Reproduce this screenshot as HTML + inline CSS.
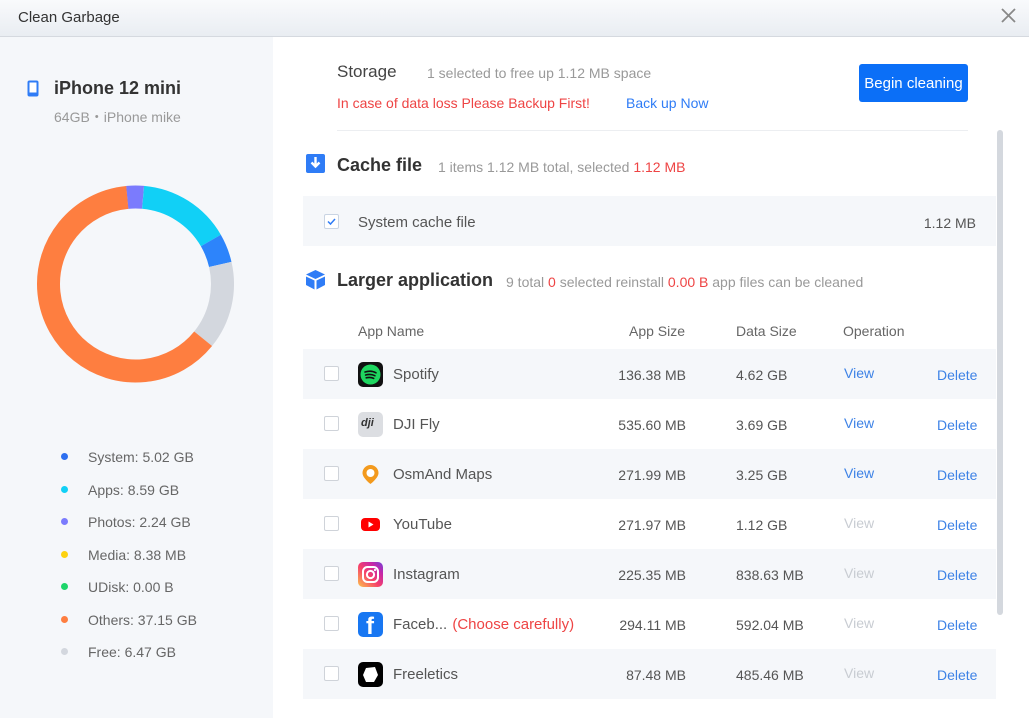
<!DOCTYPE html>
<html><head><meta charset="utf-8"><style>
*{margin:0;padding:0;box-sizing:border-box}
body{width:1029px;height:718px;overflow:hidden;font-family:"Liberation Sans",sans-serif;background:#fff;position:relative;color:#333}
.abs{position:absolute;white-space:nowrap}
.title{left:0;top:0;width:1029px;height:37px;background:linear-gradient(#f9fafc,#e9edf2);border-bottom:1px solid #d5d9df}
.left{left:0;top:37px;width:273px;height:681px;background:#f5f7fa}
.lg{font-size:14px;color:#666}
.dot{width:7px;height:7px;border-radius:50%;position:absolute}
.row{position:absolute;left:303px;width:693px;height:50px}
.sh{background:#f5f7fa}
.cb{position:absolute;left:21px;top:17px;width:15px;height:15px;border:1px solid #cfd3d9;background:#fff;border-radius:2px}
.ic{position:absolute;left:55px;top:13px;width:25px;height:25px;border-radius:5px;overflow:hidden}
.nm{position:absolute;left:90px;top:17px;font-size:15px;color:#555}
.as{position:absolute;right:310px;top:18px;font-size:14px;color:#555}
.ds{position:absolute;left:433px;top:18px;font-size:14px;color:#555}
.v{position:absolute;left:541px;top:16px;font-size:14px;color:#3d82e6}
.vd{color:#c8ccd2}
.d{position:absolute;left:634px;top:18px;font-size:14px;color:#3d82e6}
</style></head><body>
<div class="abs title"></div>
<div class="abs" style="left:18px;top:9px;font-size:15px;color:#333">Clean Garbage</div>
<svg class="abs" style="left:1001px;top:8px" width="15" height="15"><path d="M1 1l13 13M14 1L1 14" stroke="#888" stroke-width="1.8"/></svg>
<div class="abs left"></div>
<svg class="abs" style="left:27px;top:80px" width="12" height="17"><rect x="0.5" y="0.5" width="11" height="16" rx="2" fill="#2f7cf6"/><rect x="2.5" y="2.5" width="7" height="10" fill="#fff"/></svg>
<div class="abs" style="left:54px;top:78px;font-size:18px;font-weight:bold;color:#333">iPhone 12 mini</div>
<div class="abs" style="left:54px;top:107px;font-size:14px;color:#999">64GB・iPhone mike</div>
<svg class="abs" style="left:0;top:0" width="273" height="420">
<g fill="none" stroke-width="23">
<circle cx="135.5" cy="284" r="87" stroke="#7b7bfd" stroke-dasharray="15.9 1000" transform="rotate(-95.5 135.5 284)"/>
<circle cx="135.5" cy="284" r="87" stroke="#11d0f6" stroke-dasharray="83.5 1000" transform="rotate(-85 135.5 284)"/>
<circle cx="135.5" cy="284" r="87" stroke="#2d84fb" stroke-dasharray="25.8 1000" transform="rotate(-30 135.5 284)"/>
<circle cx="135.5" cy="284" r="87" stroke="#d3d7de" stroke-dasharray="79 1000" transform="rotate(-13 135.5 284)"/>
<circle cx="135.5" cy="284" r="87" stroke="#fe7e40" stroke-dasharray="342.4 1000" transform="rotate(39 135.5 284)"/>
</g></svg>
<div class="dot" style="left:61px;top:453px;background:#2d6ff0"></div><div class="abs lg" style="left:88px;top:449px">System: 5.02 GB</div>
<div class="dot" style="left:61px;top:486px;background:#11d0f6"></div><div class="abs lg" style="left:88px;top:482px">Apps: 8.59 GB</div>
<div class="dot" style="left:61px;top:518px;background:#7b7bfd"></div><div class="abs lg" style="left:88px;top:514px">Photos: 2.24 GB</div>
<div class="dot" style="left:61px;top:551px;background:#fdd20f"></div><div class="abs lg" style="left:88px;top:547px">Media: 8.38 MB</div>
<div class="dot" style="left:61px;top:583px;background:#1ed56a"></div><div class="abs lg" style="left:88px;top:579px">UDisk: 0.00 B</div>
<div class="dot" style="left:61px;top:616px;background:#fe7e40"></div><div class="abs lg" style="left:88px;top:612px">Others: 37.15 GB</div>
<div class="dot" style="left:61px;top:648px;background:#d3d7de"></div><div class="abs lg" style="left:88px;top:644px">Free: 6.47 GB</div>

<div class="abs" style="left:337px;top:62px;font-size:17px;color:#444">Storage</div>
<div class="abs" style="left:427px;top:65px;font-size:14px;color:#999">1 selected to free up 1.12 MB space</div>
<div class="abs" style="left:337px;top:95px;font-size:14px;color:#ee4444">In case of data loss Please Backup First!</div>
<div class="abs" style="left:626px;top:95px;font-size:14px;color:#2f7cf6">Back up Now</div>
<div class="abs" style="left:859px;top:64px;width:109px;height:38px;background:#0b6ff7;border-radius:3px;color:#fff;font-size:15px;text-align:center;line-height:40px">Begin cleaning</div>
<div class="abs" style="left:337px;top:130px;width:631px;height:1px;background:#eceef1"></div>
<div class="abs" style="left:997px;top:130px;width:6px;height:485px;background:#d4d8de;border-radius:3px"></div>

<svg class="abs" style="left:306px;top:154px" width="19" height="19"><rect width="19" height="19" rx="2" fill="#2f7cf6"/><path d="M9.5 3v9M5.5 8.5l4 4 4-4" stroke="#fff" stroke-width="2.4" fill="none"/></svg>
<div class="abs" style="left:337px;top:155px;font-size:18px;font-weight:bold;color:#333">Cache file</div>
<div class="abs" style="left:438px;top:159px;font-size:14px;color:#999">1 items 1.12 MB total, selected <span style="color:#ee4444">1.12 MB</span></div>
<div class="row sh" style="top:196px"><div class="cb" style="top:18px;border-color:#c9d4e3"><svg width="13" height="13" style="position:absolute;left:0;top:0"><path d="M3 6.5l2.5 2.5 4.5-5" stroke="#2f7cf6" stroke-width="1.5" fill="none"/></svg></div><div class="nm" style="left:55px;top:18px">System cache file</div><div class="abs" style="right:20px;top:19px;font-size:14px;color:#555">1.12 MB</div></div>

<svg class="abs" style="left:305px;top:269px" width="21" height="21"><path d="M10.5 1L20 5.5 10.5 10 1 5.5z" fill="#2f7cf6"/><path d="M1 7.5l8.5 4v9L1 16z" fill="#2f7cf6"/><path d="M20 7.5l-8.5 4v9l8.5-4.5z" fill="#2f7cf6"/></svg>
<div class="abs" style="left:337px;top:270px;font-size:18px;font-weight:bold;color:#333">Larger application</div>
<div class="abs" style="left:506px;top:274px;font-size:14px;color:#999">9 total <span style="color:#ee4444">0</span> selected reinstall <span style="color:#ee4444">0.00 B</span> app files can be cleaned</div>
<div class="abs" style="left:358px;top:323px;font-size:14px;color:#666">App Name</div>
<div class="abs" style="left:629px;top:323px;font-size:14px;color:#666">App Size</div>
<div class="abs" style="left:736px;top:323px;font-size:14px;color:#666">Data Size</div>
<div class="abs" style="left:843px;top:323px;font-size:14px;color:#666">Operation</div>

<div class="row sh" style="top:349px"><div class="cb"></div><div class="ic" style="background:#111"><svg width="25" height="25"><circle cx="12.5" cy="12.5" r="10" fill="#1ed760"/><path d="M7 10c4-1.3 8-1 11 .8M7.6 13c3.4-1 6.6-.7 9.3.7M8.2 15.8c2.8-.7 5.3-.5 7.5.6" stroke="#111" stroke-width="1.6" fill="none" stroke-linecap="round"/></svg></div><div class="nm">Spotify</div><div class="as">136.38 MB</div><div class="ds">4.62 GB</div><div class="v">View</div><div class="d">Delete</div></div>
<div class="row" style="top:399px"><div class="cb"></div><div class="ic" style="background:#dcdee2"><div style="position:absolute;left:3px;top:5px;font-size:11px;font-style:italic;font-weight:bold;color:#333">dji</div></div><div class="nm">DJI Fly</div><div class="as">535.60 MB</div><div class="ds">3.69 GB</div><div class="v">View</div><div class="d">Delete</div></div>
<div class="row sh" style="top:449px"><div class="cb"></div><div class="ic"><svg width="25" height="25"><path d="M12.5 3a8 8 0 0 1 8 8c0 5-8 11-8 11s-8-6-8-11a8 8 0 0 1 8-8z" fill="#f39a1d"/><circle cx="12.5" cy="11" r="4" fill="#fff"/></svg></div><div class="nm">OsmAnd Maps</div><div class="as">271.99 MB</div><div class="ds">3.25 GB</div><div class="v">View</div><div class="d">Delete</div></div>
<div class="row" style="top:499px"><div class="cb"></div><div class="ic"><svg width="25" height="25"><rect x="3" y="6" width="19" height="13" rx="4" fill="#f00"/><path d="M10.5 9.5v6l5-3z" fill="#fff"/></svg></div><div class="nm">YouTube</div><div class="as">271.97 MB</div><div class="ds">1.12 GB</div><div class="v vd">View</div><div class="d">Delete</div></div>
<div class="row sh" style="top:549px"><div class="cb"></div><div class="ic" style="background:linear-gradient(45deg,#fdc14b,#f5406b 45%,#c526a9 75%,#7043d8)"><svg width="25" height="25"><rect x="5" y="5" width="15" height="15" rx="4.5" stroke="#fff" stroke-width="2" fill="none"/><circle cx="12.5" cy="12.5" r="3.6" stroke="#fff" stroke-width="2" fill="none"/><circle cx="17" cy="8" r="1.1" fill="#fff"/></svg></div><div class="nm">Instagram</div><div class="as">225.35 MB</div><div class="ds">838.63 MB</div><div class="v vd">View</div><div class="d">Delete</div></div>
<div class="row" style="top:599px"><div class="cb"></div><div class="ic" style="background:#1877f2"><div style="position:absolute;left:8px;top:1px;font-size:24px;font-weight:bold;color:#fff">f</div></div><div class="nm">Faceb... <span style="color:#ee4444;margin-left:1px">(Choose carefully)</span></div><div class="as">294.11 MB</div><div class="ds">592.04 MB</div><div class="v vd">View</div><div class="d">Delete</div></div>
<div class="row sh" style="top:649px"><div class="cb"></div><div class="ic" style="background:#000"><svg width="25" height="25"><path d="M8 6l9-1 3 8-4 7-8 0-3-7z" fill="#fff"/></svg></div><div class="nm">Freeletics</div><div class="as">87.48 MB</div><div class="ds">485.46 MB</div><div class="v vd">View</div><div class="d">Delete</div></div>
</body></html>
